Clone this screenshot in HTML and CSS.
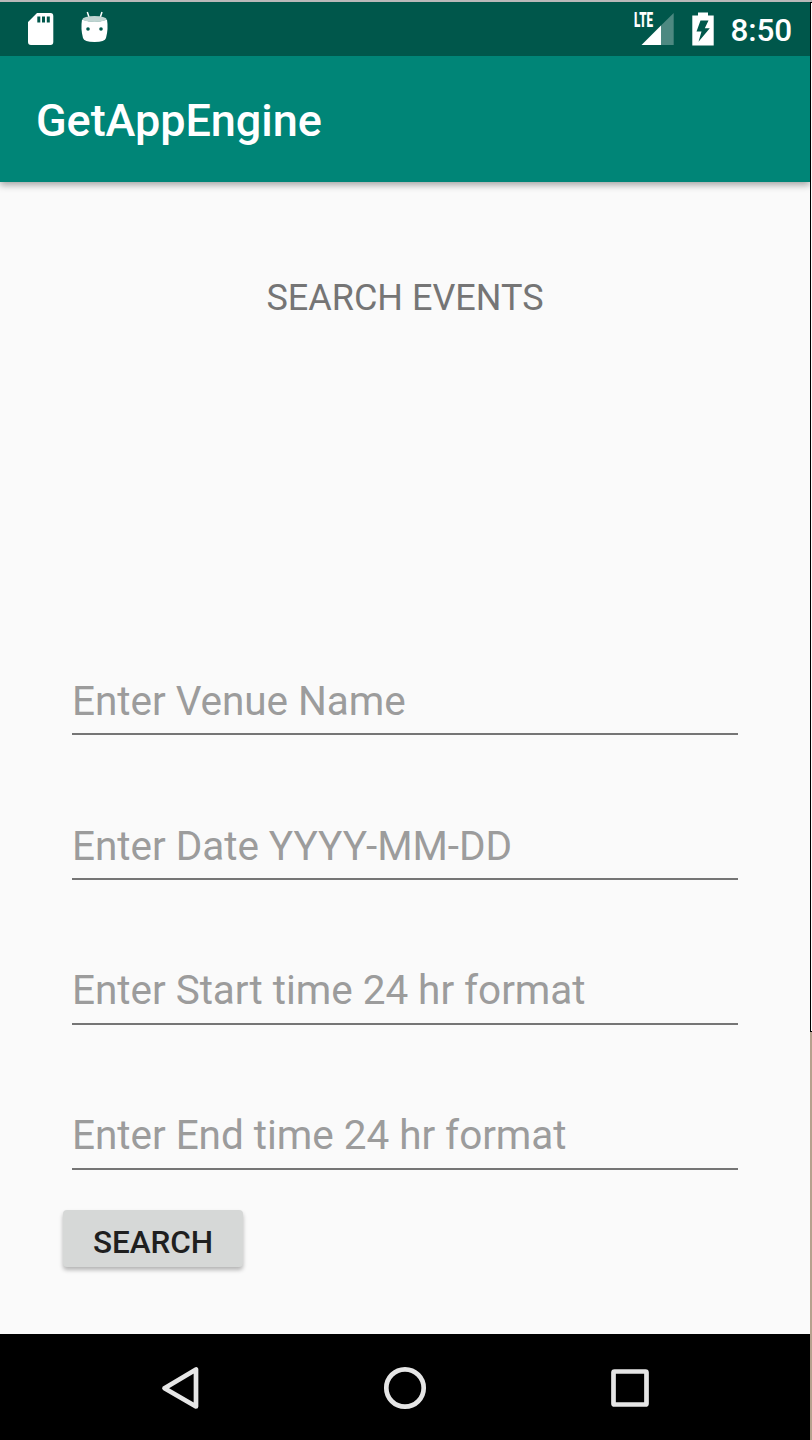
FILE: index.html
```
<!DOCTYPE html>
<html lang="en">
<head>
<meta charset="utf-8">
<title>GetAppEngine</title>
<link rel="stylesheet" href="styles.css">
</head>
<body>
<div class="window">
  <div class="device">
    <div class="status">
      <svg class="notifications" width="130" height="54" viewBox="0 2 130 54">
        <path fill="#fff" fill-rule="evenodd" d="M37 13H50.500Q53.300 13 53.300 16V42Q53.300 45 50.500 45H31Q28 45 28 42V22ZM37.300 16.500V22.500H40.300V16.500ZM42 16.500V22.500H45V16.500ZM46.800 16.500V22.500H49.800V16.500Z"/>
        <path d="M87.300 12l2 6M102 12l-2 6" stroke="#fff" stroke-width="1.500"/>
        <path fill="#fff" d="M82 19.500Q94.500 24 107 19.500Q108.500 29 106 38Q105 42 94.500 42Q84 42 83 38Q80.500 29 82 19.500Z"/>
        <ellipse cx="94.500" cy="19" rx="12" ry="3" fill="#c0d5d2"/>
        <circle cx="88" cy="29" r="1.800" fill="#00574b"/><circle cx="101" cy="29" r="1.800" fill="#00574b"/>
      </svg>
      <div class="system">
        <div class="signal">
          <span class="lte">LTE</span>
          <svg width="42" height="54" viewBox="632 2 42 54">
            <path fill="#4d8981" d="M661 25.500L673.700 13V45H661Z"/>
            <path fill="#fff" d="M641.500 45L661 25.500V45Z"/>
          </svg>
        </div>
        <svg class="battery" width="22" height="54" viewBox="692 2 22 54">
          <path fill="#fff" d="M698 12.500H708V15.500H713.700V45.500H692.300V15.500H698Z"/>
          <path fill="#00574b" d="M700.500 20.500H708.500L704.800 28.200H709.800L698.500 41.700L701.500 31.500H696.500Z"/>
        </svg>
        <span class="clock">8:50</span>
      </div>
    </div>
    <header class="appbar">GetAppEngine</header>
    <main class="content">
      <h1 class="heading">SEARCH EVENTS</h1>
      <form class="form">
        <div class="field">Enter Venue Name</div>
        <div class="field">Enter Date YYYY-MM-DD</div>
        <div class="field">Enter Start time 24 hr format</div>
        <div class="field">Enter End time 24 hr format</div>
        <button class="search" type="button">SEARCH</button>
      </form>
    </main>
    <nav class="navbar">
      <svg width="44" height="44" viewBox="158 1366 44 44"><path d="M196 1369.500V1406.500L164.500 1388.200Z"/></svg>
      <svg width="44" height="44" viewBox="383 1366 44 44"><circle cx="405" cy="1388" r="18.700"/></svg>
      <svg width="44" height="44" viewBox="608 1366 44 44"><rect x="613.500" y="1371.500" width="33" height="33" rx="1"/></svg>
    </nav>
  </div>
  <div class="edge"><div class="edge-top"></div></div>
</div>
</body>
</html>
```
FILE: styles.css
```
* { box-sizing: border-box; }
body { margin: 0; font-family: Roboto, sans-serif; background: #000; }
.window {
  display: flex;
  width: 812px;
  height: 1440px;
  border-top: 2px solid #b9b9b9;
}
.device {
  display: flex;
  flex-direction: column;
  width: 810px;
  background: #fafafa;
}
.status {
  display: flex;
  justify-content: space-between;
  height: 54px;
  background: #00574b;
  color: #fff;
}
.system { display: flex; padding-right: 18px; }
.signal { position: relative; width: 42px; margin-right: 18px; }
.lte {
  position: absolute;
  left: 2px;
  top: 8px;
  font: 900 19.5px/21px "Roboto", sans-serif;
  transform: scaleX(.6);
  transform-origin: left;
}
.battery { margin-right: 16px; }
.clock { font-weight: 500; font-size: 31.5px; line-height: 58px; letter-spacing: -.1px; }
.appbar {
  height: 126px;
  padding: 3px 36px 0;
  background: #008577;
  color: #fff;
  font-weight: 500;
  font-size: 45px;
  line-height: 123px;
  letter-spacing: -.05px;
  box-shadow: 0 3px 7px rgba(0, 0, 0, .35);
  clip-path: inset(0 0 -16px 0);
}
.content { flex: 1; }
.heading {
  margin: 94px 0 0;
  color: #757575;
  font-weight: 400;
  font-size: 36px;
  line-height: 45px;
  text-align: center;
}
.form { margin: 350.750px 72px 0; }
.field {
  height: 63.500px;
  margin-bottom: 81.250px;
  border-bottom: 2.250px solid #757575;
  color: #9c9c9c;
  font-size: 40.500px;
  line-height: 58px;
  letter-spacing: -.04px;
}
.field:nth-child(4) { margin-bottom: 40.250px; }
.search {
  display: block;
  width: 180px;
  height: 57px;
  margin-left: -9px;
  padding: 8px 0 0;
  border: 0;
  border-radius: 4px;
  background: #d6d8d7;
  color: #1f1f1f;
  font: 500 31.500px/49px Roboto, sans-serif;
  letter-spacing: -.08px;
  box-shadow: 0 3px 4px rgba(0, 0, 0, .28);
}
.navbar {
  display: flex;
  justify-content: space-between;
  height: 106px;
  padding: 32px 158px 0;
  background: #000;
}
.navbar svg { fill: none; stroke: #e6e6e6; stroke-width: 4.700; stroke-linejoin: round; }
.edge { width: 2px; background: #b5a18d; }
.edge-top {
  height: 1030px;
  border: solid #000;
  border-width: 1px 0 1px 1px;
  background: #fafafa;
}
```
